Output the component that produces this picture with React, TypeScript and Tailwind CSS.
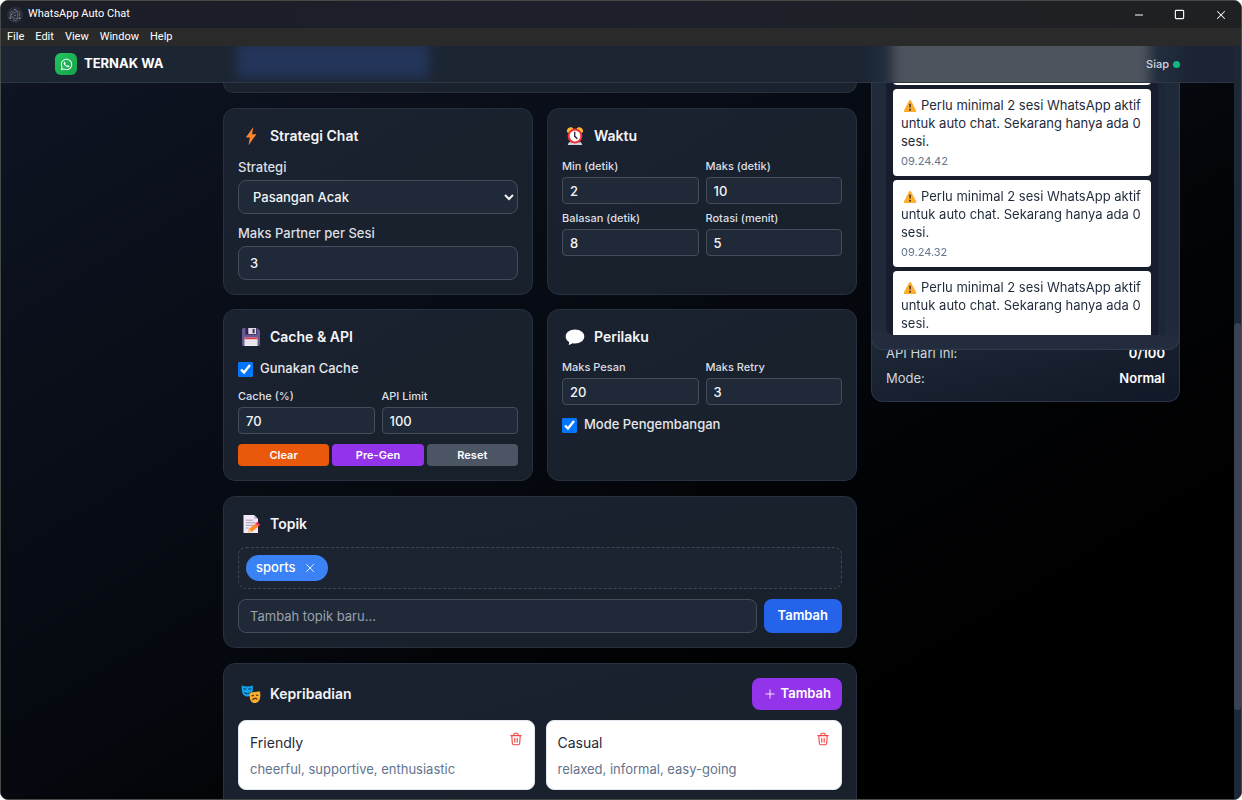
import { ReactNode, useState } from 'react';
import { Minus, Plus, Square, X } from 'lucide-react';
import { FaWhatsapp } from 'react-icons/fa';
import { SiElectron } from 'react-icons/si';

const menuItems = ['File', 'Edit', 'View', 'Window', 'Help'];

const notifications = ['09.24.52', '09.24.42', '09.24.32', '09.24.22'];

const personalities = [
  { name: 'Friendly', traits: 'cheerful, supportive, enthusiastic' },
  { name: 'Casual', traits: 'relaxed, informal, easy-going' },
];

function BoltIcon() {
  return (
    <svg viewBox="0 0 20 20" className="w-5 h-5">
      <path d="M12.4 1 4.8 11.4h4.1L7.5 19.2l7.9-11H11z" fill="#ff8430" />
    </svg>
  );
}

function ClockIcon() {
  return (
    <svg viewBox="0 0 20 20" className="w-5 h-5">
      <path d="M2 6.2C1.400 3.400 3.500 1 6.600 1.300L8.500 2.600 3.800 6.800zM18 6.200c.6-2.800-1.500-5.200-4.600-4.900l-1.900 1.300 4.700 4.200z" fill="#fcb92c" />
      <path d="M4 16.200h12l1.300 2.800H2.700z" fill="#d6d3dc" />
      <circle cx="10" cy="10" r="7.400" fill="#f0343c" />
      <circle cx="10" cy="10" r="5.400" fill="#fff" />
      <path d="M9.700 6.200v4.200l2.300 2" fill="none" stroke="#3b2a45" strokeWidth="1.400" strokeLinecap="round" />
    </svg>
  );
}

function FloppyIcon() {
  return (
    <svg viewBox="0 0 20 20" className="w-5 h-5">
      <path d="M2.500 1h13.800L19 3.600V17.500a1.500 1.500 0 0 1-1.500 1.500h-15A1.500 1.500 0 0 1 1 17.500v-15A1.500 1.500 0 0 1 2.500 1z" fill="#635994" />
      <path d="M4.500 1h11v6.500h-11z" fill="#2f2142" />
      <path d="M7.300 1h7.700v6H7.300z" fill="#e1dce8" />
      <path d="M11.600 2h2v4.200h-2z" fill="#3c2d52" />
      <path d="M3.500 10.500h13V19h-13z" fill="#efeff2" />
      <path d="M3.500 10.500h13v1.800h-13z" fill="#e8384b" />
      <path d="M3.500 14.500h13M3.500 16.800h13" stroke="#d4d2da" strokeWidth=".7" />
    </svg>
  );
}

function BubbleIcon() {
  return (
    <svg viewBox="0 0 20 20" className="w-5 h-5">
      <path d="M10 2.600c5.200 0 9.300 3 9.300 6.900 0 4-4.100 7-9.300 7-.9 0-1.700-.1-2.500-.2-1 .9-2.300 1.500-3.900 1.700.5-.9.700-1.900.5-2.900C2.100 13.800.7 11.800.7 9.500c0-3.900 4.100-6.900 9.300-6.900z" fill="#fff" />
    </svg>
  );
}

function MemoIcon() {
  return (
    <svg viewBox="0 0 20 20" className="w-5 h-5">
      <path d="M2.500 1H13l4 4v14H2.500z" fill="#f0e8f4" />
      <path d="M13 1l4 4h-4z" fill="#c9bcd6" />
      <path d="M4.800 6.200h7M4.800 8.800h9.500M4.800 11.400h7M4.800 14h3" stroke="#a99bb8" strokeWidth="1" />
      <path d="M16.300 7.700l2.900 3.200-2 1.900-3-3.200z" fill="#f8315e" />
      <path d="M14.300 9.500l3 3.200-6.600 5-3.500.8.700-3.600z" fill="#ff8a28" />
      <path d="M7.900 14.900l2.800 2.800-3.500.8z" fill="#fdd58c" />
    </svg>
  );
}

function MasksIcon() {
  return (
    <svg viewBox="0 0 20 20" className="w-5 h-5">
      <path d="M.8 1.600c3.200 1.200 7.800 1.200 11 0 .4 5.200-.4 11-5.500 11S.4 6.800.8 1.600z" fill="#13a3ea" />
      <path d="M2.500 5.400c.8-.8 1.900-.8 2.600 0M7.400 5.400c.8-.8 1.900-.8 2.600 0M3.200 8.300c1.800 1.600 4.500 1.600 6.200 0" fill="none" stroke="#0b3a63" strokeWidth="1.100" />
      <path d="M8.600 9.200c3.100-1 7.300-1.900 10.400-1.500.9 5.200.1 10.600-4.300 11.300-4.700.6-6.500-4.400-6.100-9.800z" fill="#fdb02d" />
      <path d="M10.500 11.900l2.400-.5M14.900 11.200l2.400.3M11.400 16c1.300-1.900 3.600-2.100 5-.6" fill="none" stroke="#5a3312" strokeWidth="1.200" />
    </svg>
  );
}

function WarningIcon() {
  return (
    <svg viewBox="0 0 14 14" className="inline-block w-3.5 h-3.5 ml-0.5 mr-1">
      <path d="M6.100 1.600a1.100 1.100 0 0 1 1.900 0l5.200 9.800a1.100 1.100 0 0 1-1 1.600H1.900a1.100 1.100 0 0 1-1-1.600z" fill="#fdae2c" />
      <path d="M6.200 4.800h1.700l-.3 4H6.500z" fill="#3a2b35" />
      <circle cx="7.050" cy="10.700" r=".95" fill="#3a2b35" />
    </svg>
  );
}

function TrashIcon() {
  return (
    <svg viewBox="0 0 14 14" className="w-3.5 h-3.5" fill="none" stroke="currentColor" strokeWidth="1.100" strokeLinecap="round" strokeLinejoin="round">
      <path d="M1.800 3.600h10.400M4.700 3.400l.3-1.200c.2-.6.500-.9 1.100-.9h1.800c.6 0 .9.300 1.100.9l.3 1.200M2.800 3.800l.5 7.400c.1 1 .7 1.500 1.500 1.500h4.400c.8 0 1.400-.5 1.500-1.500l.5-7.400M5.800 6.300v3.900M8.200 6.300v3.900" />
    </svg>
  );
}

function Card({ children }: { children: ReactNode }) {
  return (
    <section className="min-w-0 rounded-xl border border-[#27313f] bg-gradient-to-br from-[#1a2230] to-[#18202b] p-3.5">
      {children}
    </section>
  );
}

function CardTitle({ icon, title }: { icon: ReactNode; title: string }) {
  return (
    <div className="flex items-center gap-[9px] h-[25px] pl-[3px]">
      {icon}
      <h3 className="text-[14px] leading-5 font-semibold text-gray-100">{title}</h3>
    </div>
  );
}

function SmallField({ id, label, value }: { id: string; label: string; value: number }) {
  return (
    <div className="min-w-0">
      <label htmlFor={id} className="block mb-[3px] text-[11px] leading-4 font-medium text-[#dcdfe4]">
        {label}
      </label>
      <input
        id={id}
        type="number"
        defaultValue={value}
        className="block w-full h-[27px] rounded border border-[#434d5b] bg-[#1f2937] px-[7px] text-[13px] font-medium text-gray-100"
      />
    </div>
  );
}

function CheckRow({ id, label }: { id: string; label: string }) {
  return (
    <div className="flex items-center gap-[7px] h-5">
      <input id={id} type="checkbox" defaultChecked className="w-[15px] h-[15px] accent-[#0075ff]" />
      <label htmlFor={id} className="text-[13px] font-medium text-gray-200">
        {label}
      </label>
    </div>
  );
}

function WindowChrome() {
  return (
    <>
      <div className="flex items-center h-[27px] shrink-0 bg-gradient-to-r from-[#1b1e26] via-[#1d202b] to-[#1f2021] pl-[6px]">
        <span className="flex items-center justify-center w-4 h-4 rounded-full bg-[#2b2e3a]">
          <SiElectron className="w-3 h-3 text-[#b4cbd6]" />
        </span>
        <span className="ml-[5px] flex-1 font-['Roboto',sans-serif] text-[11px] text-white">WhatsApp Auto Chat</span>
        <button aria-label="Minimize" className="flex items-center justify-center w-[41px] h-full text-white">
          <Minus className="w-3 h-3" strokeWidth={2} />
        </button>
        <button aria-label="Maximize" className="flex items-center justify-center w-[41px] h-full text-white">
          <Square className="w-[11px] h-[11px]" strokeWidth={2.5} />
        </button>
        <button aria-label="Close" className="flex items-center justify-center w-[41px] h-full text-white">
          <X className="w-3.5 h-3.5" strokeWidth={1.75} />
        </button>
      </div>
      <nav className="flex items-center gap-[11px] h-[18px] shrink-0 bg-[#2a2a2b] pl-[6px] font-['Roboto',sans-serif] text-[11px] leading-4 text-white">
        {menuItems.map((item) => (
          <button key={item}>{item}</button>
        ))}
      </nav>
    </>
  );
}

function AppHeader() {
  return (
    <header className="relative flex items-center justify-between h-[37px] shrink-0 overflow-hidden border-b border-[#2c3644] bg-gradient-to-r from-[#1c2632] to-[#1c2433] px-[54px]">
      {/* content scrolled behind the frosted bar */}
      <div className="absolute inset-y-0 inset-x-[54px] flex gap-3.5 blur-[6px]">
        <div className="w-[154px]" />
        <div className="flex-1 pl-3.5">
          <div className="w-[192px] h-9 -mt-1 bg-[#23355a]" />
        </div>
        <div className="w-[309px] -my-4 bg-[#202b3b] pl-[21px] pr-[30px]">
          <div className="h-full bg-[#4e545e]" />
        </div>
      </div>
      <div className="relative flex items-center gap-[7px]">
        <span className="flex items-center justify-center w-[22px] h-[22px] rounded-md bg-gradient-to-br from-[#22c55e] to-[#16a34a]">
          <FaWhatsapp className="w-[13px] h-[13px] text-white" />
        </span>
        <h1 className="text-[13px] font-bold text-white">TERNAK WA</h1>
      </div>
      <div className="relative flex items-center gap-1 text-[11px] font-medium text-gray-300">
        Siap
        <span className="w-[7px] h-[7px] rounded-full bg-[#10b981]" />
      </div>
    </header>
  );
}

function Sidebar() {
  return (
    <aside className="w-[309px] shrink-0">
      <div className="relative z-10 h-[267px] rounded-b-xl border border-t-0 border-[#303b4b] bg-[#232e3f]/90 px-3.5 pb-3.5 backdrop-blur-md">
        <div className="flex h-full overflow-hidden rounded-bl-lg bg-[#171d2c]">
          <div className="flex flex-1 flex-col justify-start gap-1 overflow-hidden px-[7px]">
            {notifications.map((time, i) => (
              <article
                key={time}
                className={`shrink-0 rounded bg-white px-2 py-[7px] ${i === 0 ? '-mt-[85px]' : ''}`}
              >
                <p className="text-[13px] leading-[18px] text-[#1f2a3b]">
                  <WarningIcon />
                  Perlu minimal 2 sesi WhatsApp aktif untuk auto chat. Sekarang hanya ada 0 sesi.
                </p>
                <time className="mt-[3px] block text-[11px] leading-4 text-slate-500">{time}</time>
              </article>
            ))}
          </div>
          <div className="w-[7px] bg-[#1c2736]" />
        </div>
      </div>
      <dl className="-mt-5 rounded-b-xl border border-t-0 border-[#2b3545] bg-gradient-to-br from-[#1f2937] to-[#111827] px-3.5 pt-3.5 pb-3.5 text-[13px] leading-[18px]">
        <div className="flex justify-between mb-[7px]">
          <dt className="text-gray-300">API Hari Ini:</dt>
          <dd className="font-semibold text-white">0/100</dd>
        </div>
        <div className="flex justify-between">
          <dt className="text-gray-300">Mode:</dt>
          <dd className="font-semibold text-white">Normal</dd>
        </div>
      </dl>
    </aside>
  );
}

export default function App() {
  const [topics, setTopics] = useState(['sports']);

  return (
    <div className="flex flex-col h-screen overflow-hidden rounded-lg border border-[#474b48] bg-black font-['Inter','Liberation_Sans',sans-serif]">
      <WindowChrome />
      <div className="flex flex-1 min-h-0">
        <div className="flex flex-1 min-w-0 flex-col bg-gradient-to-br from-[#0f1524] via-[#05080e] to-black">
          <AppHeader />
          <div className="flex flex-1 min-h-0 gap-3.5 overflow-hidden px-[54px]">
            <div className="w-[154px] shrink-0" />
            <main className="flex flex-1 min-w-0 flex-col gap-[15px]">
              <div className="h-2.5 shrink-0 rounded-b-xl border border-t-0 border-[#27313f] bg-[#1a222e]" />
              <div className="grid grid-cols-2 gap-3.5">
                <Card>
                  <CardTitle icon={<BoltIcon />} title="Strategi Chat" />
                  <div className="mt-2.5">
                    <label htmlFor="strategy" className="block mb-1 text-[13px] leading-[18px] font-medium text-[#dcdfe4]">
                      Strategi
                    </label>
                    <select
                      id="strategy"
                      className="block w-full h-[34px] rounded-lg border border-[#434d5b] bg-[#1f2937] pl-2.5 text-[13px] font-medium text-gray-100"
                    >
                      <option>Pasangan Acak</option>
                    </select>
                  </div>
                  <div className="mt-2.5">
                    <label htmlFor="partners" className="block mb-1 text-[13px] leading-[18px] font-medium text-[#dcdfe4]">
                      Maks Partner per Sesi
                    </label>
                    <input
                      id="partners"
                      type="number"
                      defaultValue={3}
                      className="block w-full h-[34px] rounded-lg border border-[#434d5b] bg-[#1f2937] px-[11px] text-[13px] font-medium text-gray-100"
                    />
                  </div>
                </Card>

                <Card>
                  <CardTitle icon={<ClockIcon />} title="Waktu" />
                  <div className="mt-2.5 grid grid-cols-2 gap-x-[7px] gap-y-1.5">
                    <SmallField id="min" label="Min (detik)" value={2} />
                    <SmallField id="max" label="Maks (detik)" value={10} />
                    <SmallField id="reply" label="Balasan (detik)" value={8} />
                    <SmallField id="rotation" label="Rotasi (menit)" value={5} />
                  </div>
                </Card>

                <Card>
                  <CardTitle icon={<FloppyIcon />} title="Cache & API" />
                  <div className="mt-2.5 mb-[9px]">
                    <CheckRow id="use-cache" label="Gunakan Cache" />
                  </div>
                  <div className="grid grid-cols-2 gap-[7px]">
                    <SmallField id="cache" label="Cache (%)" value={70} />
                    <SmallField id="api-limit" label="API Limit" value={100} />
                  </div>
                  <div className="mt-2.5 grid grid-cols-3 gap-[3px] text-[11px] font-semibold text-white">
                    <button className="h-[22px] rounded bg-[#ea580c]">Clear</button>
                    <button className="h-[22px] rounded bg-[#9333ea]">Pre-Gen</button>
                    <button className="h-[22px] rounded bg-[#4b5563]">Reset</button>
                  </div>
                </Card>

                <Card>
                  <CardTitle icon={<BubbleIcon />} title="Perilaku" />
                  <div className="my-2.5 grid grid-cols-2 gap-[7px]">
                    <SmallField id="max-message" label="Maks Pesan" value={20} />
                    <SmallField id="max-retry" label="Maks Retry" value={3} />
                  </div>
                  <CheckRow id="dev-mode" label="Mode Pengembangan" />
                </Card>
              </div>

              {/* Topics */}
              <Card>
                <CardTitle icon={<MemoIcon />} title="Topik" />
                <div className="mt-[11px] flex flex-wrap gap-1.5 rounded-lg border border-dashed border-[#3d4857] bg-[#1b2430] p-[7px]">
                  {topics.map((topic) => (
                    <span
                      key={topic}
                      className="flex items-center gap-2 h-[26px] rounded-full bg-[#3b82f6] pl-2.5 pr-[11px] text-[13px] font-medium text-white"
                    >
                      {topic}
                      <button aria-label={`Hapus ${topic}`} onClick={() => setTopics(topics.filter((t) => t !== topic))}>
                        <X className="w-3.5 h-3.5" strokeWidth={1.5} />
                      </button>
                    </span>
                  ))}
                </div>
                <div className="mt-2.5 flex gap-[7px]">
                  <input
                    type="text"
                    aria-label="Tambah topik baru"
                    placeholder="Tambah topik baru..."
                    className="flex-1 min-w-0 h-[34px] rounded-lg border border-[#434d5b] bg-[#1f2937] px-[11px] text-[13px] text-gray-100 placeholder:text-gray-400"
                  />
                  <button className="h-[34px] rounded-lg bg-[#2563eb] px-3.5 text-[13px] font-semibold text-white">Tambah</button>
                </div>
              </Card>

              {/* Personalities */}
              <Card>
                <div className="flex items-center justify-between">
                  <CardTitle icon={<MasksIcon />} title="Kepribadian" />
                  <button className="flex items-center gap-1 h-8 rounded-lg bg-[#9333ea] px-[11px] text-[13px] font-semibold text-white">
                    <Plus className="w-3.5 h-3.5" strokeWidth={1.5} />
                    Tambah
                  </button>
                </div>
                <div className="mt-2.5 grid grid-cols-2 gap-[11px]">
                  {personalities.map((p) => (
                    <article key={p.name} className="flex justify-between rounded-lg border border-slate-200 bg-white px-[11px] py-2.5">
                      <div>
                        <h4 className="text-[14px] leading-6 text-[#1f2a3b]">{p.name}</h4>
                        <p className="mt-1 text-[13px] leading-5 text-slate-500">{p.traits}</p>
                      </div>
                      <button aria-label={`Hapus ${p.name}`} className="h-4 text-[#ef4444]">
                        <TrashIcon />
                      </button>
                    </article>
                  ))}
                </div>
                <div className="h-10" />
              </Card>
            </main>
            <Sidebar />
          </div>
        </div>

        {/* Page scrollbar */}
        <div className="flex w-[7px] shrink-0 flex-col bg-[#1d2736]">
          <div className="flex-[277]" />
          <div className="flex-[387] rounded-full bg-[#394152]" />
          <div className="flex-[89]" />
        </div>
      </div>
    </div>
  );
}
